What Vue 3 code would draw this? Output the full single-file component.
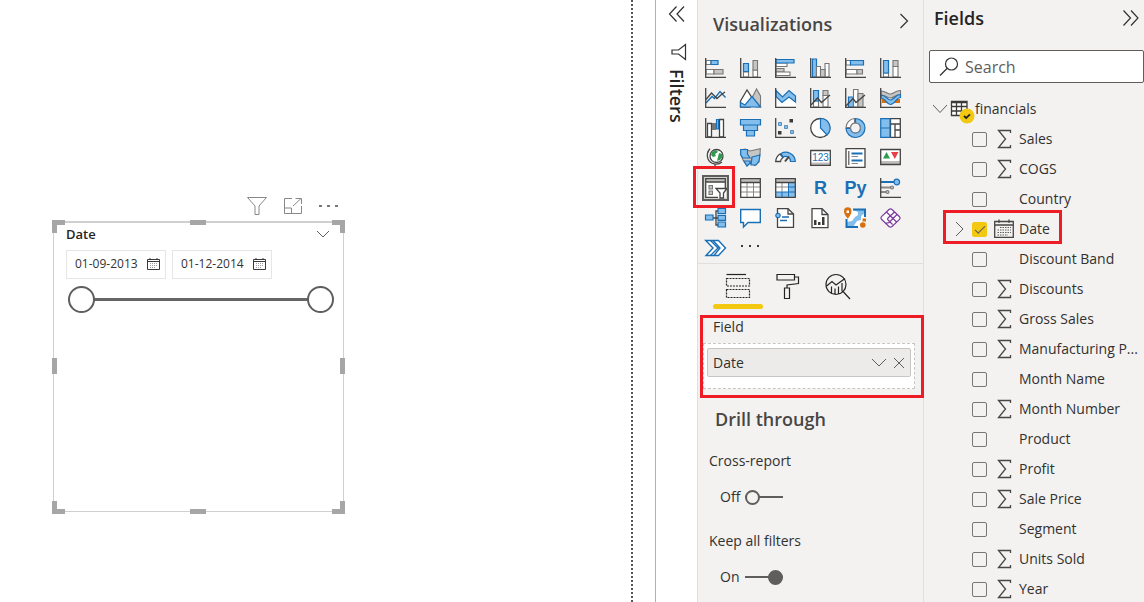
<template>
  <div class="report">
    <!-- canvas -->
    <main class="canvas">
      <div class="page">
        <div class="visual-wrap">
          <div class="visual-tools">
            <button type="button" aria-label="Filters on visual">
              <svg width="22" height="20" viewBox="0 0 22 20"><path class="tool" d="M1.5 1.500H20.5L13 10V18.500H9V10Z" /></svg>
            </button>
            <button type="button" aria-label="Focus mode">
              <svg width="20" height="18" viewBox="0 0 20 18"><path class="tool" d="M9 1.500H1.500V16.500H18.500V9M1.500 11H8.500V16.500M10 9L18 1.500M12.500 1.500H18.500V7" /></svg>
            </button>
            <button type="button" aria-label="More options">
              <svg width="20" height="18" viewBox="0 0 20 18"><path class="dots" d="M1 8h3v2H1zM9 8h3v2H9zM17 8h3v2h-3z" /></svg>
            </button>
          </div>
          <section class="slicer">
            <span v-for="h in handles" :key="h" :class="['handle', h]"></span>
            <header class="slicer-head">
              <h3>Date</h3>
              <button type="button" aria-label="Slicer type">
                <svg width="14" height="8" viewBox="0 0 14 8"><path class="thin" d="M1 1L7 7L13 1" /></svg>
              </button>
            </header>
            <div class="dates">
              <div v-for="d in dates" :key="d.id" class="date-box">
                <input :id="d.id" v-model="d.value" type="text" :aria-label="d.label" />
                <button type="button" :aria-label="'Pick ' + d.label">
                  <svg width="13" height="12" viewBox="0 0 13 12">
                    <path class="cal" d="M.5 1.500H12.500V11.500H.5ZM.5 3.500H12.500M3 0V2M10 0V2" />
                    <path class="cal-dots" d="M3 5.500H11M3 7.500H11M3 9.500H9" />
                  </svg>
                </button>
              </div>
            </div>
            <div class="range">
              <input v-model="rangeStart" type="range" min="0" max="100" aria-label="Range start" />
              <input v-model="rangeEnd" type="range" min="0" max="100" aria-label="Range end" />
            </div>
          </section>
        </div>
      </div>
    </main>

    <!-- collapsed filters pane -->
    <aside class="filters">
      <button type="button" aria-label="Expand filters">
        <svg width="18" height="16" viewBox="0 0 18 16"><path class="line" d="M8.500 .5L1.500 8L8.500 15.500M16 .5L9 8L16 15.500" /></svg>
      </button>
      <svg width="18" height="18" viewBox="0 0 18 18"><path class="line" d="M16.500 1.500V16.500L9.500 11H3V7H9.500Z" /></svg>
      <h2>Filters</h2>
    </aside>

    <!-- visualizations pane -->
    <aside class="visuals">
      <header class="visuals-head">
        <h2>Visualizations</h2>
        <button type="button" aria-label="Collapse visualizations">
          <svg width="10" height="16" viewBox="0 0 10 16"><path class="line" d="M1.500 1L8.500 8L1.500 15" /></svg>
        </button>
      </header>
      <div class="gallery">
        <button
          v-for="v in visuals"
          :key="v.name"
          type="button"
          :aria-label="v.name"
          :class="['visual-btn', { selected: selectedVisual === v.name }]"
          @click="selectedVisual = v.name"
        >
          <span v-if="v.text" class="glyph">{{ v.text }}</span>
          <svg v-else width="21" height="20" viewBox="0 0 21 20">
            <path v-for="(s, i) in v.shapes" :key="i" :class="s[0]" :d="s[1]" />
            <text v-if="v.label" x="10.500" y="12.500" class="svg-label">{{ v.label }}</text>
          </svg>
        </button>
      </div>
      <div class="tabs">
        <button
          v-for="t in tabs"
          :key="t.name"
          type="button"
          :aria-label="t.name"
          :class="['tab-btn', { active: activeTab === t.name }]"
          @click="activeTab = t.name"
        >
          <svg width="28" height="28" viewBox="0 0 28 28">
            <path v-for="(s, i) in t.shapes" :key="i" :class="s[0]" :d="s[1]" />
          </svg>
        </button>
      </div>
      <section class="field-section">
        <h4>Field</h4>
        <div class="well">
          <div class="pill">
            <span>Date</span>
            <button type="button" aria-label="Field options">
              <svg width="16" height="9" viewBox="0 0 16 9"><path class="thin" d="M1 1L8 8L15 1" /></svg>
            </button>
            <button type="button" aria-label="Remove field">
              <svg width="12" height="12" viewBox="0 0 12 12"><path class="thin" d="M1 1L11 11M11 1L1 11" /></svg>
            </button>
          </div>
        </div>
      </section>
      <section class="drill">
        <h2>Drill through</h2>
        <template v-for="o in options" :key="o.id">
          <h4>{{ o.title }}</h4>
          <div class="switch">
            <label :for="o.id">{{ o.on ? 'On' : 'Off' }}</label>
            <input :id="o.id" v-model="o.on" type="checkbox" role="switch" />
          </div>
        </template>
      </section>
    </aside>

    <!-- fields pane -->
    <aside class="fields">
      <header class="fields-head">
        <h2>Fields</h2>
        <button type="button" aria-label="Collapse fields">
          <svg width="18" height="16" viewBox="0 0 18 16"><path class="line" d="M1.500 .5L8.500 8L1.500 15.500M9 .5L16 8L9 15.500" /></svg>
        </button>
      </header>
      <div class="search">
        <svg width="20" height="20" viewBox="0 0 20 20"><path class="line" d="M18.500 7A6 6 0 1 1 6.500 7A6 6 0 1 1 18.500 7M8 11.500L1 18.500" /></svg>
        <input v-model="query" type="search" placeholder="Search" aria-label="Search fields" />
      </div>
      <div class="table-row">
        <svg width="16" height="10" viewBox="0 0 16 10"><path class="chev" d="M1 1L8 8.500L15 1" /></svg>
        <svg width="27" height="24" viewBox="0 0 27 24">
          <path class="grid-fill" d="M3.500 4.500H19V18.500H3.500Z" />
          <path class="grid" d="M3.500 4.500H19V18.500H3.500ZM3.500 5.500H19M3.500 9.500H19M3.500 14H19M8.500 5V18M13.500 5V18" />
          <circle cx="19" cy="19" r="7.500" class="badge" />
          <path class="badge-check" d="M16 19L18.200 21L22 17.300" />
        </svg>
        <span>financials</span>
      </div>
      <ul>
        <li v-for="f in shownFields" :key="f.name" :class="{ marked: f.type === 'date' }">
          <span class="expand">
            <svg v-if="f.type === 'date'" width="10" height="16" viewBox="0 0 10 16"><path class="chev" d="M2 1L9 8L2 15" /></svg>
          </span>
          <input :id="'f-' + f.name" v-model="f.checked" type="checkbox" />
          <span class="kind">
            <svg v-if="f.type === 'sum'" width="14" height="20" viewBox="0 0 14 20"><path class="sigma" d="M13.500 4V1.500H1.500L8.500 10L1.500 18.500H13.500V16" /></svg>
            <svg v-if="f.type === 'date'" width="20" height="20" viewBox="0 0 20 20">
              <path class="sigma" d="M.7 2.500H19.300V18.300H.7ZM.7 6H19.300M5 .5V4M15 .5V4" />
              <path class="cal-grid" d="M6 8.500H17M3.500 11H17M3.500 13.500H17M3.500 16H14" />
            </svg>
          </span>
          <label :for="'f-' + f.name">{{ f.name }}</label>
        </li>
      </ul>
    </aside>
  </div>
</template>

<script setup>
import { ref, computed } from 'vue';

const handles = ['tl', 'tc', 'tr', 'ml', 'mr', 'bl', 'bc', 'br'];

const dates = ref([
  { id: 'start', label: 'start date', value: '01-09-2013' },
  { id: 'end', label: 'end date', value: '01-12-2014' }
]);
const rangeStart = ref(0);
const rangeEnd = ref(100);

const selectedVisual = ref('Slicer');
const activeTab = ref('Fields');
const query = ref('');

const axis = ['axis', 'M.7 0V19.300H21'];

// each shape is [class, path]
const visuals = [
  { name: 'Stacked bar chart', shapes: [['white', 'M1 2.500H6V6.500H1ZM1 11.500H9V16H1Z'], ['blue', 'M6 2.500H13V6.500H6Z'], ['gray', 'M9 11.500H18V16H9Z'], axis] },
  { name: 'Stacked column chart', shapes: [['white', 'M3.500 14H8.500V19H3.500ZM13 12H17.500V19H13Z'], ['blue', 'M3.500 5.500H8.500V13.500H3.500Z'], ['gray', 'M13 2.500H17.500V12H13Z'], axis] },
  { name: 'Clustered bar chart', shapes: [['white', 'M1 5H12V8.500H1Z'], ['blue', 'M1 1.500H19V5H1Z'], ['gray', 'M1 10.500H9V14H1Z'], ['white', 'M1 14H15V17.500H1Z'], axis] },
  { name: 'Clustered column chart', shapes: [['blue', 'M2.500 1H6.500V19H2.500Z'], ['white', 'M6.500 8.500H10.500V19H6.500ZM15 5.500H19V19H15Z'], ['gray', 'M10.500 11.500H15V19H10.500Z'], axis] },
  { name: '100% stacked bar chart', shapes: [['white', 'M1 2.500H5.500V7H1ZM1 11.500H12V16H1Z'], ['blue', 'M5.500 2.500H18.500V7H5.500Z'], ['gray', 'M12 11.500H17.500V16H12Z'], axis] },
  { name: '100% stacked column chart', shapes: [['white', 'M3.500 15H8.500V19H3.500ZM13 8.500H18V19H13Z'], ['blue', 'M3.500 2.500H8.500V15H3.500Z'], ['gray', 'M13 2.500H18V8.500H13Z'], axis] },
  { name: 'Line chart', shapes: [['blue-line', 'M1 15L7 8.500L9.500 10.500L15 3.500L20.500 9.500'], ['dark-line', 'M1 11.500L6.500 5L12 10.500L16.500 6.500L20 4'], axis] },
  { name: 'Area chart', shapes: [['gray', 'M12 10L16.500 1L20.500 8V19H16Z'], ['white-dark', 'M.5 13L7 2L14 13L10 19H.5Z'], ['blue', 'M.5 14.500L5 17L12 8.500L20.500 19H.5Z']] },
  { name: 'Stacked area chart', shapes: [['paper', 'M1 9L7 15L14 9L20.500 14V19H1Z'], ['blue', 'M1 2.500L7.500 9L14 2.500L20.500 8V14L14 9L7 14.500L1 8.500Z'], axis] },
  { name: 'Line and stacked column chart', shapes: [['white', 'M3.500 13H8.500V19H3.500ZM13 7.500H18V19H13Z'], ['blue', 'M3.500 2.500H8.500V13H3.500Z'], ['gray', 'M13 2.500H18V7.500H13Z'], ['dark-line', 'M1 17L7.500 10L11.500 14.500L20 7'], axis] },
  { name: 'Line and clustered column chart', shapes: [['blue', 'M3.500 9H8.500V19H3.500Z'], ['white', 'M8.500 1.500H13V19H8.500Z'], ['gray', 'M13 5.500H18V19H13Z'], ['dark-line', 'M1 18L8 10.500L11 14.500L20 7'], axis] },
  { name: 'Ribbon chart', shapes: [['orange', 'M2 11H8V15H2ZM14 11H20V15H14Z'], ['gray', 'M1 3C6 3 7 6 10.500 6C14 6 15 2.500 20.500 2.500V6.500C15 6.500 14 10 10.500 10C7 10 6 7 1 7Z'], ['blue', 'M1 7C6 7 7 12 10.500 12C14 12 15 6.500 20.500 6.500V9.500C16 9.500 15 16.500 10.500 16.500C6 16.500 6 10 1 10Z'], axis] },
  { name: 'Waterfall chart', shapes: [['white-dark', 'M2.500 5.500H6.500V19H2.500ZM14.500 1.500H18.500V19H14.500Z'], ['solid-gray', 'M7 5H11V12H7Z'], ['blue', 'M11.500 1.500H13.500V11H11.500Z'], axis] },
  { name: 'Funnel', shapes: [['blue', 'M.5 1.500H20.500V7H.5ZM3.500 7H17.500V12.500H3.500ZM6.500 12.500H14.500V18H6.500Z']] },
  { name: 'Scatter chart', shapes: [['solid', 'M14.500 1H18V4.500H14.500ZM3 13H6.500V16.500H3Z'], ['blue soft-edge', 'M3.500 4.500H6.500V7.500H3.500ZM9.500 7.500H12.500V10.500H9.500ZM15.500 12.500H18.500V15.500H15.500Z'], axis] },
  { name: 'Pie chart', shapes: [['white-dark', 'M.7 10A9.500 9.500 0 1 0 19.700 10A9.500 9.500 0 1 0 .7 10'], ['blue', 'M10.500 .5A9.500 9.500 0 0 1 17 17L10.500 10Z']] },
  { name: 'Donut chart', shapes: [['white', 'M1 9.500A9.500 9.500 0 0 1 9.500 .5V5A5 5 0 0 0 5.500 9.500Z'], ['blue', 'M10.500 .5A9.500 9.500 0 1 1 1 10.500H5.500A5 5 0 1 0 10.500 5Z'], ['gray-line', 'M5.500 10A5 5 0 1 0 15.500 10A5 5 0 1 0 5.500 10']] },
  { name: 'Treemap', shapes: [['white-dark', 'M10.500 .7H20.300V6H10.500ZM10.500 6H15V19.300H10.500ZM15 6H20.300V12H15ZM15 12H20.300V19.300H15Z'], ['blue', 'M.7 .7H10V10H.7ZM.7 10H10V19.300H.7Z']] },
  { name: 'Map', shapes: [['white-dark', 'M5 8A6.500 6.500 0 1 0 18 8A6.500 6.500 0 1 0 5 8'], ['green', 'M7 4L11 2L13 4L10 6L11 8L8 9L6 7ZM14 5L17 6L17.500 9L15 12L12 13L13 9Z'], ['dark-line', 'M5 .7A10 10 0 0 0 3 11A9 9 0 0 0 17 14M10 16V18.500M5.500 18.800H15']] },
  { name: 'Filled map', shapes: [['gray', 'M.7 2L5 1L10 3L20.300 .7L20 6L19 8V14L15 17.500L10 15L7 18L3 12L1 7Z'], ['blue', 'M.7 1.500H7.500V6L10 10H3L.7 7ZM12 9L20 7L19 13L16 17H11ZM4 13H10V15L7 18Z']] },
  { name: 'Gauge', shapes: [['white-dark', 'M.7 13.500A9.500 9.500 0 0 1 5 6L8 9.500A5 5 0 0 0 5.500 13.500Z'], ['blue', 'M6 5.500A9.500 9.500 0 0 1 20.300 13.500H15.500A5 5 0 0 0 8 9Z'], ['dark-line heavy', 'M10 13.500L14 8.500']] },
  { name: 'Card', label: '123', shapes: [['paper', 'M.7 2.500H20.300V17.300H.7Z'], ['solid-light', 'M1 14.500H20V17H1Z'], ['frame', 'M.7 2.500H20.300V17.300H.7Z']] },
  { name: 'Multi-row card', shapes: [['white-dark', 'M1 .7H20V19.300H1Z'], ['solid-gray', 'M3 3H4.500V17H3Z'], ['blue-line heavy', 'M6.500 5.500H17.500M6.500 12.500H17.500'], ['gray-line', 'M6.500 8.500H13M6.500 15.500H13']] },
  { name: 'KPI', shapes: [['paper', 'M.7 1.500H20.300V16.500H.7Z'], ['green', 'M3 10.500L6.500 4L10 10.500Z'], ['red', 'M11 4H18.500L14.800 11Z'], ['solid-light', 'M1 13H20V16H1Z'], ['frame', 'M.7 1.500H20.300V16.500H.7Z']] },
  { name: 'Slicer', shapes: [['solid-light', 'M.7 .7H20.300V4H.7Z'], ['paper', 'M.7 4H20.300V19.300H.7Z'], ['frame', 'M20.300 10V.7H.7V19.300H13M.7 4H20.300'], ['gray', 'M4 7.500H7.500V11H4ZM4 13H7.500V16.500H4Z'], ['white-dark', 'M11 10.500H22L18.500 15V20H15V15Z']] },
  { name: 'Table', shapes: [['paper', 'M.7 .7H20.300V19.300H.7Z'], ['solid-light', 'M1 1H20V4H1Z'], ['gray-line', 'M1 9H20M1 14H20M7 4V19M13.500 4V19'], ['frame', 'M.7 .7H20.300V19.300H.7ZM.7 4.500H20.300']] },
  { name: 'Matrix', shapes: [['paper', 'M.7 .7H20.300V19.300H.7Z'], ['solid-light', 'M1 1H20V4H1Z'], ['solid-blue', 'M13.500 4.500H20V19H1V14H13.500Z'], ['blue-line faint', 'M1 14H20M13.500 4V19M13.500 9H20M7 14V19'], ['gray-line', 'M1 9H13M7 4V14'], ['frame', 'M.7 .7H20.300V19.300H.7ZM.7 4.500H20.300']] },
  { name: 'R script visual', text: 'R' },
  { name: 'Python visual', text: 'Py' },
  { name: 'Key influencers', shapes: [['blue-line heavy', 'M1 4H14'], ['gray-line heavy', 'M1 9.500H11M1 14H6'], ['blue', 'M14 4A2.800 2.800 0 1 0 19.600 4A2.800 2.800 0 1 0 14 4'], ['gray', 'M10.500 9.500A1.500 1.500 0 1 0 13.500 9.500A1.500 1.500 0 1 0 10.500 9.500M6 14A1.500 1.500 0 1 0 9 14A1.500 1.500 0 1 0 6 14'], axis] },
  { name: 'Decomposition tree', shapes: [['dark-line', 'M8 10H13M13 3H11V17H13'], ['blue', 'M.5 7H8V12H.5ZM13 .5H20.500V5.500H13ZM13 7.300H20.500V12.300H13ZM13 14H20.500V19H13Z']] },
  { name: 'Q&A', shapes: [['white-blue', 'M.7 1.500H20.300V14.500H8L3.500 19V14.500H.7Z']] },
  { name: 'Smart narrative', shapes: [['white-dark', 'M2.500 .7H13L18.500 6V19.300H2.500Z'], ['dark-line', 'M13 .7V6H18.500'], ['blue', 'M.8 7.500A2.200 2.200 0 1 0 5.200 7.500A2.200 2.200 0 1 0 .8 7.500'], ['blue-line', 'M7 9H14M5 12.500H12']] },
  { name: 'Paginated report', shapes: [['white-dark', 'M2 .7H12L18 6.500V19.700H2Z'], ['dark-line', 'M12 .7V6.500H18'], ['solid', 'M4 12H6.500V17H4ZM8 14H10.500V17H8ZM12 9H14.500V17H12Z']] },
  { name: 'ArcGIS map', shapes: [['paper', 'M1 1H20V19H1Z'], ['solid-blue', 'M8 2H20V5L16 8V12L12 13L10 16L8 19H1V14L7 13L10 9L13 7V4Z'], ['blue-line heavy', 'M8 1.500H20V9M1.500 11V19H13'], ['orange', 'M-1 3A3.700 3.700 0 0 1 6.500 3C6.500 7 3 10 2.800 11C2.600 10 -1 7 -1 3ZM15 17A2.800 2.800 0 1 0 20.600 17A2.800 2.800 0 1 0 15 17M17.500 10.500H21V13.500H17.500Z'], ['paper', 'M1.500 2.500H4V5H1.500Z']] },
  { name: 'Power Apps', shapes: [['purple', 'M9 1.500Q10.500 .3 12 1.500L19.500 8.700Q20.800 10 19.500 11.300L12 18.500Q10.500 19.700 9 18.500L1.500 11.300Q.2 10 1.500 8.700ZM6.500 4L16.500 14M14.500 4L8 10Q7 11 8 12L12.500 16.500M17 6.500L9 14.500Q7.500 15.500 6.500 14.500']] },
  { name: 'Power Automate', shapes: [['white-blue', 'M.7 2.500H13.500L20.500 10L13.500 17.500H1L8 10Z'], ['blue-line', 'M5.500 2.500L13 10L5.500 17.500M8 2.500L15 10L9 17.500']] },
  { name: 'Get more visuals', shapes: [['solid', 'M1 7H3V9H1ZM9 7H11V9H9ZM17 7H19V9H17Z']] }
];

const tabs = [
  { name: 'Fields', shapes: [['tab-line', 'M2.500 1.500H22'], ['tab-dash', 'M2.500 5.500H25.500V13H2.500ZM2.500 16.500H25.500V24.500H2.500Z']] },
  { name: 'Format', shapes: [['tab-line', 'M3 1.500H20.500V7H3ZM20.500 4H24.500V10.500L13 12V15M10.500 15H15.500V25.500H10.500Z']] },
  { name: 'Analytics', shapes: [['tab-line', 'M2 11.500A10 10 0 1 0 22 11.500A10 10 0 1 0 2 11.500M19.500 19L26 26M2 13.500L8 8.500L12 12L21 5.500M7.500 13.500V20M11 15.500V21M14.500 13.500V21M18 10V18.500']] }
];

const options = ref([
  { id: 'cross', title: 'Cross-report', on: false },
  { id: 'keep', title: 'Keep all filters', on: true }
]);

const fields = ref([
  { name: 'Sales', type: 'sum', checked: false },
  { name: 'COGS', type: 'sum', checked: false },
  { name: 'Country', type: 'text', checked: false },
  { name: 'Date', type: 'date', checked: true },
  { name: 'Discount Band', type: 'text', checked: false },
  { name: 'Discounts', type: 'sum', checked: false },
  { name: 'Gross Sales', type: 'sum', checked: false },
  { name: 'Manufacturing P...', type: 'sum', checked: false },
  { name: 'Month Name', type: 'text', checked: false },
  { name: 'Month Number', type: 'sum', checked: false },
  { name: 'Product', type: 'text', checked: false },
  { name: 'Profit', type: 'sum', checked: false },
  { name: 'Sale Price', type: 'sum', checked: false },
  { name: 'Segment', type: 'text', checked: false },
  { name: 'Units Sold', type: 'sum', checked: false },
  { name: 'Year', type: 'sum', checked: false }
]);

const shownFields = computed(() =>
  fields.value.filter((f) => f.name.toLowerCase().includes(query.value.toLowerCase()))
);
</script>

<style>
body {
  margin: 0;
  background: #fff;
}
</style>

<style scoped>
.report {
  display: flex;
  height: 100vh;
  overflow: hidden;
  font-family: "Open Sans", "Noto Sans", sans-serif;
  font-size: 14px;
  line-height: 20px;
  color: #323130;
}

.report *,
.report *::before,
.report *::after {
  box-sizing: border-box;
}

h2,
h3,
h4,
ul {
  margin: 0;
  padding: 0;
  font-weight: 400;
}

button {
  display: flex;
  align-items: center;
  justify-content: center;
  padding: 0;
  border: 0;
  background: none;
  cursor: pointer;
}

input {
  margin: 0;
  font-family: inherit;
}

svg {
  display: block;
  flex: none;
  overflow: visible;
}

path {
  fill: none;
}

/* canvas */
.canvas {
  flex: 1;
  min-width: 0;
  padding-right: 22px;
}

.page {
  height: 100%;
  padding: 195px 0 0 53px;
  border-right: 2px dotted #555;
}

.visual-wrap {
  width: 291px;
}

.visual-tools {
  display: flex;
  justify-content: flex-end;
  align-items: center;
  gap: 15px;
  height: 26px;
  padding: 0 6px 4px 0;
}

.tool {
  stroke: #8a8886;
}

.dots {
  fill: #777;
}

.slicer {
  position: relative;
  height: 291px;
  padding: 2px 9px 0 12px;
  border: 1px solid #d0d0d0;
  border-top-width: 2px;
}

.handle {
  position: absolute;
  border: 0 solid #a6a6a6;
}

.tl,
.tr,
.bl,
.br {
  width: 13px;
  height: 13px;
}

.tl { top: -3px; left: -2px; border-width: 5px 0 0 5px; }
.tr { top: -3px; right: -2px; border-width: 5px 5px 0 0; }
.bl { bottom: -3px; left: -2px; border-width: 0 0 5px 5px; }
.br { bottom: -3px; right: -2px; border-width: 0 5px 5px 0; }

.tc,
.bc {
  left: 136px;
  width: 16px;
  border-top-width: 5px;
}

.ml,
.mr {
  top: 135px;
  height: 16px;
  border-left-width: 5px;
}

.tc { top: -3px; }
.bc { bottom: -3px; }
.ml { left: -2px; }
.mr { right: -2px; }

.slicer-head {
  display: flex;
  justify-content: space-between;
  align-items: center;
  height: 18px;
  padding-right: 4px;
}

.slicer-head h3 {
  font-size: 13px;
  font-weight: 600;
  color: #252423;
}

.thin {
  stroke: #605e5c;
}

.dates {
  display: flex;
  gap: 6px;
  padding-top: 7px;
}

.date-box {
  display: flex;
  align-items: center;
  width: 100px;
  height: 29px;
  padding: 0 5px 2px 8px;
  border: 1px solid #e6e6e6;
}

.date-box input {
  flex: 1;
  min-width: 0;
  padding: 0;
  border: 0;
  outline: 0;
  background: none;
  font-size: 12px;
  color: #333;
}

.cal {
  stroke: #3b3a39;
}

.cal-dots {
  stroke: #a19f9d;
  stroke-dasharray: 1 1;
}

.range {
  display: grid;
  padding: 7px 0 0 2px;
}

.range input {
  grid-area: 1 / 1;
  width: 100%;
  height: 27px;
  appearance: none;
  background: linear-gradient(#666, #666) center / calc(100% - 20px) 3px no-repeat;
  pointer-events: none;
}

.range input + input {
  background: none;
}

.range input::-webkit-slider-thumb {
  appearance: none;
  box-sizing: border-box;
  width: 27px;
  height: 27px;
  border: 2px solid #605e5c;
  border-radius: 50%;
  background: #fff;
  pointer-events: auto;
}

/* filters */
.filters {
  display: flex;
  flex-direction: column;
  align-items: center;
  width: 42px;
  padding-top: 6px;
  border-left: 1px solid #b3b0ad;
}

.filters > svg {
  margin: 21px 0 8px 2px;
}

.filters h2 {
  writing-mode: vertical-rl;
  font-size: 18px;
  font-weight: 600;
  line-height: 20px;
  color: #252423;
}

.line {
  stroke: #323130;
  stroke-width: 1.2;
}

/* visualizations */
.visuals {
  width: 226px;
  border-left: 1px solid #e1dfdd;
  background: #f3f2f1;
}

.visuals-head {
  display: flex;
  justify-content: space-between;
  align-items: center;
  height: 53px;
  padding: 0 14px 12px 15px;
}

.visuals-head h2,
.drill h2 {
  font-size: 18px;
  font-weight: 600;
  line-height: 24px;
  color: #484644;
}

.visuals-head h2 {
  padding-top: 7px;
}

.gallery {
  display: grid;
  grid-template-columns: repeat(6, 35px);
  grid-auto-rows: 30px;
}

.visual-btn.selected {
  position: relative;
}

.visual-btn.selected svg {
  outline: 2px solid #605e5c;
  outline-offset: 1px;
  box-shadow: 0 0 0 2px #d2d0ce;
}

.visual-btn.selected::after {
  position: absolute;
  inset: -7px -2px -5px -5px;
  border: 3px solid #ee1c25;
  content: "";
}

.glyph {
  font-size: 18px;
  font-weight: 700;
  line-height: 20px;
  color: #1a6fb5;
}

.svg-label {
  font-size: 10px;
  font-weight: 400;
  text-anchor: middle;
  fill: #1a6fb5;
}

.axis,
.frame,
.dark-line {
  stroke: #444;
  stroke-width: 1.3;
}

.gray-line { stroke: #8a8886; }
.blue-line { stroke: #1a6fb5; stroke-width: 1.4; }
.faint { stroke-width: 1; }
.heavy { stroke-width: 2; }
.paper { fill: #fff; }
.white { fill: #fff; stroke: #777; stroke-width: 1.1; }
.white-dark { fill: #fff; stroke: #444; stroke-width: 1.3; }
.white-blue { fill: #fff; stroke: #1a6fb5; stroke-width: 1.4; }
.blue { fill: #83beec; stroke: #1a6fb5; stroke-width: 1.2; }
.soft-edge { stroke: #5a8fba; stroke-width: 1; }
.gray { fill: #c8c6c4; stroke: #777; stroke-width: 1.1; }
.solid { fill: #3b3a39; }
.solid-gray { fill: #797775; }
.solid-light { fill: #c0bebc; }
.solid-blue { fill: #83beec; }
.orange { fill: #d9700f; }
.green { fill: #2e9a4e; }
.red { fill: #e8404a; }
.purple { fill: #fff; stroke: #7b3a9c; stroke-width: 1.2; }

.tabs {
  display: flex;
  height: 46px;
  padding-left: 15px;
  border-top: 1px solid #e1dfdd;
}

.tab-btn {
  width: 50px;
  padding-top: 6px;
  border-bottom: 5px solid transparent;
}

.tab-btn.active {
  position: relative;
}

.tab-btn.active::after {
  position: absolute;
  inset: auto 0 -5px;
  height: 5px;
  border-radius: 3px;
  background: #f2c811;
  content: "";
}

.tab-line,
.tab-dash {
  stroke: #252423;
  stroke-width: 1.2;
}

.tab-dash {
  stroke-dasharray: 2 1;
}

.field-section {
  height: 83px;
  margin: 6px -1px 0 2px;
  border: 3px solid #ee1c25;
  position: relative;
}

.field-section h4 {
  height: 25px;
  padding-left: 10px;
  line-height: 18px;
}

.well {
  height: 46px;
  margin-right: 6px;
  padding: 4px 3px;
  border: 1px dashed #c8c6c4;
  background: #fff;
}

.pill {
  display: flex;
  align-items: center;
  gap: 6px;
  height: 29px;
  padding: 0 5px;
  border: 1px solid #c8c6c4;
  border-radius: 2px;
  background: #edebe9;
}

.pill span {
  flex: 1;
}

.drill {
  padding: 9px 11px 0;
}

.drill h2 {
  padding: 0 0 20px 6px;
}

.switch {
  display: flex;
  align-items: center;
  gap: 5px;
  height: 20px;
  margin: 16px 0 24px 11px;
}

.switch label {
  min-width: 20px;
}

.switch input {
  display: flex;
  align-items: center;
  width: 38px;
  height: 15px;
  appearance: none;
  background: linear-gradient(#605e5c, #605e5c) center / 100% 2px no-repeat;
}

.switch input::before {
  width: 15px;
  height: 15px;
  border: 2px solid #605e5c;
  border-radius: 50%;
  background: #f3f2f1;
  content: "";
}

.switch input:checked {
  justify-content: flex-end;
}

.switch input:checked::before {
  background: #605e5c;
}

/* fields */
.fields {
  width: 221px;
  border-left: 1px solid #e1dfdd;
  background: #f3f2f1;
  overflow: hidden;
}

.fields-head {
  display: flex;
  justify-content: space-between;
  align-items: center;
  height: 50px;
  padding: 0 4px 14px 10px;
}

.fields-head h2 {
  font-size: 18px;
  font-weight: 600;
  line-height: 24px;
  color: #252423;
}

.search {
  display: flex;
  align-items: center;
  gap: 6px;
  height: 33px;
  margin-left: 5px;
  padding-left: 9px;
  border: 1px solid #605e5c;
  border-radius: 2px;
  background: #fff;
}

.search input {
  flex: 1;
  min-width: 0;
  padding: 0;
  border: 0;
  outline: 0;
  background: none;
  font-size: 16px;
}

.search input::placeholder {
  color: #605e5c;
}

.table-row {
  display: flex;
  align-items: center;
  height: 30px;
  margin-top: 11px;
  padding-left: 8px;
}

.chev {
  stroke: #605e5c;
}

.grid {
  stroke: #3b3a39;
  stroke-width: 1.3;
}

.grid-fill {
  fill: #fff;
}

.badge {
  fill: #f2c811;
}

.badge-check {
  fill: none;
  stroke: #252423;
  stroke-width: 1.8;
}

li {
  display: flex;
  align-items: center;
  height: 30px;
  padding-left: 30px;
  list-style: none;
}

li.marked {
  position: relative;
}

li.marked::after {
  position: absolute;
  inset: -4px auto 0 19px;
  width: 119px;
  border: 3px solid #ee1c25;
  pointer-events: none;
  content: "";
}

.expand {
  width: 18px;
}

li input {
  width: 15px;
  height: 15px;
  appearance: none;
  border: 1px solid #797775;
  border-radius: 2px;
}

li input:checked {
  border-color: #f2c811;
  background: #f2c811;
}

li input:checked::before {
  display: block;
  width: 10px;
  height: 5px;
  margin: 3px 0 0 2px;
  border: solid #605e5c;
  border-width: 0 0 1px 1px;
  transform: rotate(-45deg);
  content: "";
}

.kind {
  display: flex;
  justify-content: center;
  width: 32px;
  padding-left: 1px;
}

li label {
  white-space: nowrap;
}

.sigma {
  stroke: #484644;
  stroke-width: 1.3;
}

.cal-grid {
  stroke: #605e5c;
  stroke-dasharray: 1.5 1;
}
</style>
